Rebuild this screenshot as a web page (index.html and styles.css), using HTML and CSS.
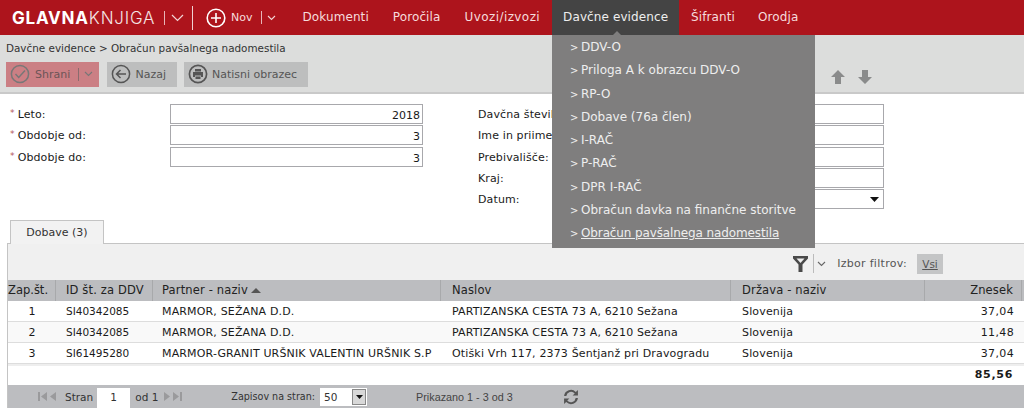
FILE: index.html
```html
<!DOCTYPE html>
<html lang="sl">
<head>
<meta charset="utf-8">
<title>Obračun pavšalnega nadomestila</title>
<link rel="stylesheet" href="styles.css">
</head>
<body>
<header class="topbar">
  <div class="logo"><b>GLAVNA</b>KNJIGA</div>
  <span class="tick"></span>
  <svg class="chev logo-chev" width="13" height="8" viewBox="0 0 13 8"><path d="M1 1l5.500 5.500L12 1" fill="none" stroke="#f2d5d6" stroke-width="1.200"/></svg>
  <span class="tick tall"></span>
  <svg class="plus" width="20" height="20" viewBox="0 0 20 20"><circle cx="10" cy="10" r="8.800" fill="none" stroke="#fff" stroke-width="1.600"/><path d="M10 5v10M5 10h10" stroke="#fff" stroke-width="1.600"/></svg>
  <span class="nov">Nov</span>
  <span class="tick short"></span>
  <svg class="chev nov-chev" width="9" height="6" viewBox="0 0 9 6"><path d="M1 1l3.500 3.500L8 1" fill="none" stroke="#f2d5d6" stroke-width="1.100"/></svg>
  <nav class="nav">
    <a class="nav-item n1">Dokumenti</a>
    <a class="nav-item n2">Poročila</a>
    <a class="nav-item n3">Uvozi/izvozi</a>
    <a class="nav-item active">Davčne evidence</a>
    <a class="nav-item n5">Šifranti</a>
    <a class="nav-item n6">Orodja</a>
  </nav>
</header>

<section class="toolbar">
  <div class="crumbs">Davčne evidence &gt; Obračun pavšalnega nadomestila</div>
  <div class="actions">
    <button class="btn save">
      <svg width="20" height="20" viewBox="0 0 20 20"><circle cx="10" cy="10" r="8.600" fill="none" stroke="#777" stroke-width="1.500"/><path d="M5.500 10l3.200 3.400L15 6.500" fill="none" stroke="#777" stroke-width="1.500"/></svg>
      <span>Shrani</span><i class="sep"></i>
      <svg width="9" height="6" viewBox="0 0 9 6"><path d="M1 1l3.500 3.500L8 1" fill="none" stroke="#777" stroke-width="1.100"/></svg>
    </button>
    <button class="btn back">
      <svg width="20" height="20" viewBox="0 0 20 20"><circle cx="10" cy="10" r="8.600" fill="none" stroke="#555" stroke-width="1.500"/><path d="M15 10H6M9.500 6L5.500 10l4 4" fill="none" stroke="#555" stroke-width="1.500"/></svg>
      <span>Nazaj</span>
    </button>
    <button class="btn print">
      <svg width="20" height="20" viewBox="0 0 20 20"><circle cx="10" cy="10" r="8.600" fill="none" stroke="#555" stroke-width="1.700"/><path d="M7 5h6v2.500H7zM5 8h10v5h-2v-1.500H7V13H5zM7.500 12.500h5V15h-5z" fill="#555"/></svg>
      <span>Natisni obrazec</span>
    </button>
    <div class="arrows">
      <svg width="16" height="16" viewBox="0 0 16 16"><path d="M8 1L1 8h4v7h6V8h4z" fill="#8a8b8b"/></svg>
      <svg width="16" height="16" viewBox="0 0 16 16"><path d="M8 15L1 8h4V1h6v7h4z" fill="#8a8b8b"/></svg>
    </div>
  </div>
</section>

<section class="form">
  <div class="col left">
    <div class="row"><label><em>*</em>Leto:</label><div class="input">2018</div></div>
    <div class="row"><label><em>*</em>Obdobje od:</label><div class="input">3</div></div>
    <div class="row"><label><em>*</em>Obdobje do:</label><div class="input">3</div></div>
  </div>
  <div class="col right">
    <div class="row"><label>Davčna številka:</label><div class="input"></div></div>
    <div class="row"><label>Ime in priimek:</label><div class="input"></div></div>
    <div class="row"><label>Prebivališče:</label><div class="input"></div></div>
    <div class="row"><label>Kraj:</label><div class="input"></div></div>
    <div class="row"><label>Datum:</label><div class="input select"><svg width="9" height="5" viewBox="0 0 9 5"><path d="M0 0h9L4.500 5z" fill="#111"/></svg></div></div>
  </div>
</section>

<div class="tabs"><div class="tab">Dobave (3)</div></div>

<section class="panel">
  <div class="filter">
    <svg class="funnel" width="15" height="16" viewBox="0 0 15 16"><path d="M0 0h15v2.500L9.500 8.500V16h-4V8.500L0 2.500z" fill="#4a4a4a"/><path d="M3.500 2.500h8L7.500 7z" fill="#f0f0f0"/></svg>
    <i class="fsep"></i>
    <svg width="9" height="6" viewBox="0 0 9 6"><path d="M1 1l3.500 3.500L8 1" fill="none" stroke="#666" stroke-width="1.100"/></svg>
    <span class="flabel">Izbor filtrov:</span>
    <span class="fval">Vsi</span>
  </div>
  <div class="grid head">
    <div class="c zap">Zap.št.</div>
    <div class="c">ID št. za DDV</div>
    <div class="c partner">Partner - naziv <svg width="10" height="5" viewBox="0 0 10 5"><path d="M5 0l5 5H0z" fill="#555"/></svg></div>
    <div class="c wide">Naslov</div>
    <div class="c wide">Država - naziv</div>
    <div class="c num">Znesek</div>
  </div>
  <div class="grid line">
    <div class="c mid">1</div><div class="c id">SI40342085</div><div class="c">MARMOR, SEŽANA D.D.</div><div class="c wide">PARTIZANSKA CESTA 73 A, 6210 Sežana</div><div class="c wide">Slovenija</div><div class="c num">37,04</div>
  </div>
  <div class="grid line alt">
    <div class="c mid">2</div><div class="c id">SI40342085</div><div class="c">MARMOR, SEŽANA D.D.</div><div class="c wide">PARTIZANSKA CESTA 73 A, 6210 Sežana</div><div class="c wide">Slovenija</div><div class="c num">11,48</div>
  </div>
  <div class="grid line">
    <div class="c mid">3</div><div class="c id">SI61495280</div><div class="c">MARMOR-GRANIT URŠNIK VALENTIN URŠNIK S.P</div><div class="c wide">Otiški Vrh 117, 2373 Šentjanž pri Dravogradu</div><div class="c wide">Slovenija</div><div class="c num">37,04</div>
  </div>
  <div class="total"><b>85,56</b></div>
  <div class="pager">
    <svg class="pg" width="9" height="9" viewBox="0 0 9 9"><path d="M0 0h2v9H0zM9 0v9L3 4.500z" fill="#9a9a9c"/></svg>
    <svg class="pg" width="6" height="9" viewBox="0 0 6 9"><path d="M6 0v9L0 4.500z" fill="#9a9a9c"/></svg>
    <span class="stran">Stran</span>
    <span class="pbox">1</span>
    <span class="odn">od 1</span>
    <svg class="pg" width="6" height="9" viewBox="0 0 6 9"><path d="M0 0v9l6-4.500z" fill="#9a9a9c"/></svg>
    <svg class="pg" width="9" height="9" viewBox="0 0 9 9"><path d="M9 0H7v9h2zM0 0v9l6-4.500z" fill="#9a9a9c"/></svg>
    <span class="zapisov">Zapisov na stran:</span>
    <span class="psel">50<i><svg width="7" height="4" viewBox="0 0 7 4"><path d="M0 0h7L3.500 4z" fill="#111"/></svg></i></span>
    <span class="prikaz">Prikazano 1 - 3 od 3</span>
    <svg class="refresh" width="16" height="16" viewBox="0 0 15 15"><path d="M1 6.500A6.500 6.500 0 0 1 12 2.700L14 1v5H9l2-1.800A4.500 4.500 0 0 0 3.100 6.500zM14 8.500A6.500 6.500 0 0 1 3 12.300L1 14V9h5l-2 1.800a4.500 4.500 0 0 0 7.900-2.300z" fill="#555"/></svg>
  </div>
</section>

<div class="menu">
  <span class="notch"></span>
  <a>DDV-O</a>
  <a>Priloga A k obrazcu DDV-O</a>
  <a>RP-O</a>
  <a>Dobave (76a člen)</a>
  <a>I-RAČ</a>
  <a>P-RAČ</a>
  <a>DPR I-RAČ</a>
  <a>Obračun davka na finančne storitve</a>
  <a class="cur"><u>Obračun pavšalnega nadomestila</u></a>
</div>
</body>
</html>
```
FILE: styles.css
```css
* { box-sizing: border-box; }
html, body { margin: 0; height: 408px; overflow: hidden; }
body { font: 11px/14px "DejaVu Sans", sans-serif; color: #1a1a1a; background: #fff; position: relative; }
svg { display: block; flex: none; }

.topbar { height: 35px; background: #ad141c; display: flex; align-items: center; color: #f6dcdd; font-size: 12px; }
.logo { margin-left: 12px; width: 152px; font: 300 17px "Inter", sans-serif; letter-spacing: .8px; color: #f4e4e4; white-space: nowrap; }
.logo b { color: #fff; font-weight: 700; }
.tick { width: 1px; height: 14px; background: #e8b5b7; }
.tick.tall { height: 24px; background: #f0d0d1; margin-left: 8px; }
.tick.short { margin-left: 9px; height: 13px; }
.logo-chev { margin-left: 6px; }
.plus { margin-left: 13px; }
.nov { margin-left: 5px; font-size: 11px; }
.nov-chev { margin-left: 5px; }
.nav { display: flex; height: 35px; margin-left: 15px; }
.nav-item { padding: 0 12px; line-height: 35px; white-space: nowrap; font-size: 12px; letter-spacing: .1px; }
.nav-item.n1 { padding: 0 12px 0 11px; }
.nav-item.n3 { letter-spacing: .42px; }
.nav-item.active { background: #444; color: #eee; padding: 0 11px; }
.nav-item.n5 { padding-right: 11px; }

.toolbar { height: 59px; background: #dcdddc; border-bottom: 2px solid #c9c9c9; padding: 6px 6px 0; }
.crumbs { height: 14px; font-size: 10.400px; color: #333; }
.actions { display: flex; align-items: center; gap: 7.500px; margin-top: 6px; height: 26px; }
.btn { height: 25px; border: 0; padding: 0 8px 0 4px; display: flex; align-items: center; gap: 5px; font: 11px "DejaVu Sans", sans-serif; color: #555; background: #bdbebe; }
.btn.save { background: #cb7f84; color: #6b5557; width: 93px; padding-right: 4px; }
.btn.back { width: 70px; }
.btn.print { width: 124px; gap: 4px; }
.sep { width: 1px; height: 13px; background: #8a6c6e; margin-left: 3px; }
.arrows { position: absolute; left: 830px; top: 69px; display: flex; gap: 11px; }

.form { height: 126px; display: flex; padding: 10px 140px 0 10px; }
.col { display: flex; flex-direction: column; gap: 1.300px; }
.col.left { width: 413px; }
.col.right { margin-left: 55px; width: 406px; }
.row { display: flex; height: 20px; align-items: center; }
.row label { flex: 1; font-size: 11px; white-space: nowrap; padding-top: 2px; letter-spacing: .12px; }
.row em { color: #b5555d; font-style: normal; font-size: 9px; position: relative; top: -2px; margin-right: 3px; }
.input { width: 253px; height: 20px; border: 1px solid #a8a8ac; background: #fff; text-align: right; padding: 3px 2px 0 0; line-height: 15px; }
.select { display: flex; justify-content: flex-end; align-items: center; padding: 0 4px 0 0; }

.tabs { height: 23px; padding-left: 10px; background: #fff; position: relative; z-index: 1; }
.tab { width: 94px; height: 24px; background: #f2f2f2; border: 1px solid #c4c4c4; border-bottom: 0; text-align: center; line-height: 23px; font-size: 11px; color: #333; }

.panel { margin-left: 7px; background: #f0f0f0; border-top: 1px solid #c4c4c4; border-left: 1px solid #c4c4c4; height: 165px; }
.filter { height: 36px; display: flex; align-items: center; padding: 3px 81px 0 0; justify-content: flex-end; color: #555; }
.funnel { margin-right: 5px; }
.fsep { width: 1px; height: 19px; background: #bbb; margin-right: 3px; }
.flabel { margin-left: 11px; font-size: 11px; letter-spacing: .3px; }
.fval { margin-left: 10px; background: #c4c5c6; height: 20px; width: 26px; text-align: center; line-height: 20px; text-decoration: underline; font-size: 10.500px; }

.grid { display: grid; grid-template-columns: 48px 97px 288px 290px 194px 97px 2px; }
.head { height: 21px; background: #bcbdc0; line-height: 21px; }
.head .c { border-right: 1px solid #a8a9ab; font-size: 11.500px; letter-spacing: .15px; padding-left: 10px; white-space: nowrap; display: flex; align-items: center; gap: 3px; color: #222; }
.head .zap { padding-left: 0; letter-spacing: 0; }
.head .partner { padding-left: 9px; }
.head .wide { padding-left: 11px; }
.head .num { justify-content: flex-end; padding: 0 8px 0 0; }
.line { height: 21px; background: #fff; border-bottom: 1px solid #ddd; line-height: 21px; font-size: 11px; letter-spacing: .15px; }
.line.alt { background: #f9f9f9; }
.line .c { padding-left: 9px; white-space: nowrap; }
.line .wide { padding-left: 11px; }
.line .id { padding-left: 10px; font-size: 10.500px; letter-spacing: 0; }
.line .mid { padding: 0; text-align: center; }
.line .num { text-align: right; padding-right: 8px; letter-spacing: .35px; }
.total { height: 21px; background: #fff; border-top: 2px solid #eee; padding-right: 11px; line-height: 18px; font-size: 11px; text-align: right; letter-spacing: .7px; }
.total b { font-weight: 700; }

.pager { height: 23px; background: #bcbdc0; display: flex; align-items: center; padding-left: 30px; font-size: 10.500px; color: #333; }
.pg { margin-right: 3px; }
.stran { margin: 0 4px 0 6px; }
.pbox { width: 33px; height: 20px; background: #fff; text-align: center; line-height: 19px; margin: 3px 5px 0 0; }
.odn { margin-right: 6px; }
.zapisov { margin-left: 46px; font-size: 9.600px; }
.psel { margin-left: 5px; width: 47px; height: 18px; background: #fff; display: flex; align-items: center; justify-content: space-between; padding-left: 4px; }
.psel i { width: 14px; height: 16px; background: #d8d8d8; border: 1px solid #888; display: flex; align-items: center; justify-content: center; margin-right: 1px; }
.prikaz { margin-left: 49px; font-family: "Liberation Sans", sans-serif; font-size: 10.800px; color: #444; }
.refresh { margin-left: 50px; }

.menu { position: absolute; left: 552px; top: 35px; width: 263px; height: 213px; background: #7f7e7e; padding-top: 1px; color: #eee; z-index: 5; }
.menu a { display: block; height: 23.300px; line-height: 23px; padding-left: 29px; font-size: 12px; position: relative; white-space: nowrap; }
.menu a::before { content: ">"; position: absolute; left: 18px; font-size: 10px; }
.cur { letter-spacing: -.12px; }
.notch { position: absolute; left: 59px; top: -4px; border: 6px solid transparent; border-top: 0; border-bottom-color: #7f7e7e; }
```
